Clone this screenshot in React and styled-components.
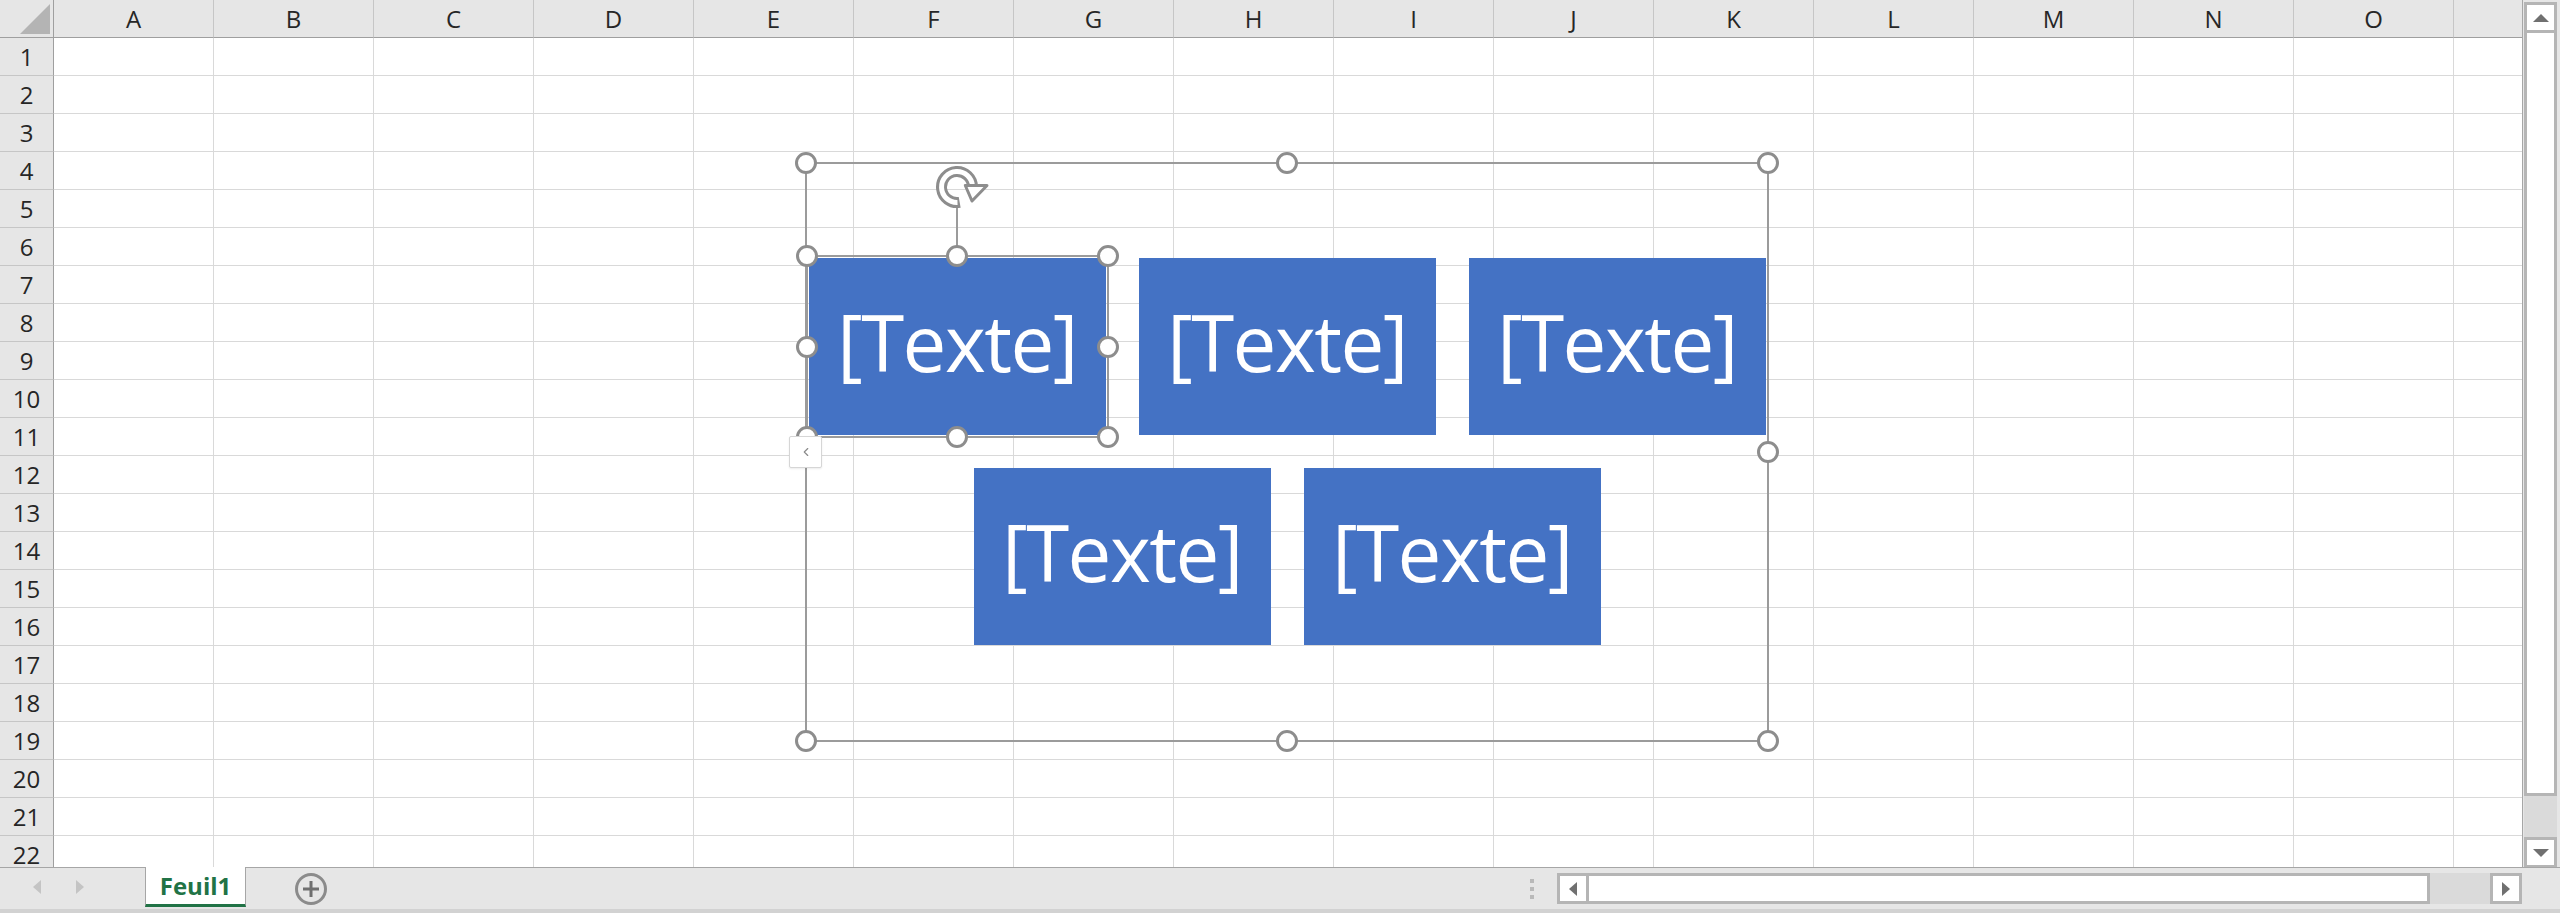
import React from "react";
import styled, { createGlobalStyle } from "styled-components";
import { ChevronLeft } from "lucide-react";

const GlobalStyle = createGlobalStyle`
  html, body {
    margin: 0;
    padding: 0;
    overflow: hidden;
    background: #fff;
  }
  body {
    font-family: "Open Sans", "Noto Sans", sans-serif;
  }
`;

// P is only partly on screen, its label falls past the visible edge
const COLUMNS = "ABCDEFGHIJKLMNOP".split("");
const ROWS = Array.from({ length: 22 }, (_, i) => i + 1);
const HANDLES = [
  [0, 0], [50, 0], [100, 0],
  [0, 50], [100, 50],
  [0, 100], [50, 100], [100, 100],
];

const Window = styled.div`
  width: 2560px;
  height: 913px;
  display: grid;
  grid-template-rows: 867px 46px;
  background: #e6e6e6;
  overflow: hidden;
`;

const Workspace = styled.div`
  display: flex;
  min-height: 0;
`;

const Sheet = styled.div`
  position: relative;
  width: 2523px;
  height: 867px;
  box-sizing: border-box;
  border-right: 1px solid #a6a6a6;
  background: #fff;
  overflow: hidden;
`;

const Grid = styled.div`
  display: grid;
  grid-template-columns: 54px repeat(16, 160px);
  grid-template-rows: repeat(23, 38px);
`;

const Cell = styled.div`
  position: relative;
  box-sizing: border-box;
  display: flex;
  align-items: center;
  justify-content: center;
  font-size: 24px;
  color: #262626;
  border-right: 1px solid
    ${(p) => (p.$kind === "cell" ? "#d9d9d9" : p.$kind === "col" ? "#c6c6c6" : "#9f9f9f")};
  border-bottom: 1px solid
    ${(p) => (p.$kind === "cell" ? "#d9d9d9" : p.$kind === "row" ? "#c6c6c6" : "#9f9f9f")};
  background: ${(p) => (p.$kind === "cell" ? "#fff" : "#e6e6e6")};

  ${(p) =>
    p.$kind === "corner" &&
    `
    &::after {
      content: "";
      position: absolute;
      right: 3px;
      bottom: 3px;
      width: 0;
      height: 0;
      border-left: 30px solid transparent;
      border-bottom: 30px solid #b4b4b4;
    }
  `}
`;

/* ---------- SmartArt ---------- */

const Frame = styled.div`
  position: absolute;
  left: 805px;
  top: 162px;
  width: 964px;
  height: 580px;
  box-sizing: border-box;
  border: 2px solid #9b9b9b;
  padding-top: 94px;
  display: flex;
  flex-direction: column;
  align-items: center;
  gap: 33px;
`;

const ShapeRow = styled.div`
  display: flex;
  gap: 33px;
`;

const Shape = styled.div`
  position: relative;
  width: 297px;
  height: 177px;
  background: #4472c4;
  color: #fff;
  display: flex;
  align-items: center;
  justify-content: center;
  font-size: 78px;
  letter-spacing: -1.5px;
  line-height: 1;
  padding-bottom: 10px;
  box-sizing: border-box;
`;

const Selection = styled.div`
  position: absolute;
  inset: -3px;
  border: 2px solid #9b9b9b;
  pointer-events: none;
`;

const Handle = styled.span`
  position: absolute;
  z-index: 2;
  width: 22px;
  height: 22px;
  box-sizing: border-box;
  border: 3px solid #8d8d8d;
  border-radius: 50%;
  background: #fff;
  left: calc(${(p) => p.$x}% + ${(p) => p.$x / 50 - 1}px - 11px);
  top: calc(${(p) => p.$y}% + ${(p) => p.$y / 50 - 1}px - 11px);
`;

const Stem = styled.span`
  position: absolute;
  left: calc(50% - 1px);
  top: -50px;
  width: 2px;
  height: 48px;
  background: #9b9b9b;
`;

const RotateWrap = styled.span`
  position: absolute;
  left: calc(50% - 22px);
  top: -92px;
  width: 56px;
  height: 44px;

  svg {
    display: block;
  }
`;

const ExpandTab = styled.div`
  position: absolute;
  z-index: 3;
  left: -18px;
  top: calc(50% - 16px);
  width: 33px;
  height: 32px;
  box-sizing: border-box;
  background: #fff;
  border: 1px solid #d6d6d6;
  border-radius: 2px;
  box-shadow: 0 1px 2px rgba(0, 0, 0, 0.08);
  display: flex;
  align-items: center;
  justify-content: center;
  color: #8a8a8a;
`;

const RotateIcon = () => (
  <svg width="56" height="44" viewBox="0 0 56 44">
    <path d="M 24.7 37.3 A 15.5 15.5 0 1 1 37.5 22" fill="none" stroke="#8d8d8d" strokeWidth="11" />
    <path d="M 22.5 37.5 A 15.5 15.5 0 1 1 37.5 21" fill="none" stroke="#fff" strokeWidth="5" />
    <polygon points="30.3,20.5 52,20.5 37,36" fill="#fff" stroke="#8d8d8d" strokeWidth="3" strokeLinejoin="round" />
  </svg>
);

/* ---------- vertical scrollbar ---------- */

const VScroll = styled.div`
  width: 33px;
  margin-left: 1px;
  padding-top: 2px;
  display: flex;
  flex-direction: column;
`;

const ScrollButton = styled.div`
  box-sizing: border-box;
  width: ${(p) => (p.$w ? `${p.$w}px` : "auto")};
  height: ${(p) => (p.$h ? `${p.$h}px` : "auto")};
  background: #fff;
  border: 3px solid #b5b5b5;
  display: flex;
  align-items: center;
  justify-content: center;
  flex-shrink: 0;
`;

const Arrow = styled.span`
  width: 0;
  height: 0;
  ${(p) =>
    p.$dir === "up"
      ? `border-left: 8px solid transparent; border-right: 8px solid transparent; border-bottom: 8px solid ${p.$color};`
      : p.$dir === "down"
      ? `border-left: 8px solid transparent; border-right: 8px solid transparent; border-top: 8px solid ${p.$color};`
      : p.$dir === "left"
      ? `border-top: 7px solid transparent; border-bottom: 7px solid transparent; border-right: 8px solid ${p.$color};`
      : `border-top: 7px solid transparent; border-bottom: 7px solid transparent; border-left: 8px solid ${p.$color};`}
`;

const Thumb = styled.div`
  box-sizing: border-box;
  background: #fff;
  border: 3px solid #b5b5b5;
  ${(p) => (p.$vertical ? "border-top: none; height: 763px;" : "border-left: none; width: 841px;")}
  flex-shrink: 0;
`;

const Track = styled.div`
  background: #dadada;
  flex-shrink: 0;
  ${(p) => (p.$vertical ? "height: 41px;" : "width: 60px;")}
`;

/* ---------- bottom bar ---------- */

const BottomBar = styled.div`
  display: flex;
  box-sizing: border-box;
  border-top: 1px solid #a6a6a6;
  border-bottom: 4px solid #d2d2d2;
  background: #e6e6e6;
`;

const SheetNav = styled.div`
  width: 145px;
  display: flex;
  align-items: center;
  gap: 35px;
  padding-left: 33px;
  box-sizing: border-box;
  padding-bottom: 4px;
`;

const SheetTab = styled.div`
  width: 101px;
  height: 40px;
  margin-top: -1px;
  box-sizing: border-box;
  background: #fff;
  border-left: 1px solid #a6a6a6;
  border-right: 1px solid #a6a6a6;
  border-bottom: 3px solid #217346;
  color: #217346;
  font-weight: 700;
  font-size: 24px;
  display: flex;
  align-items: center;
  justify-content: center;
`;

const AddSheet = styled.div`
  width: 32px;
  height: 32px;
  margin: 5px 0 0 49px;
  box-sizing: border-box;
  border: 3px solid #8b8b8b;
  border-radius: 50%;
  position: relative;

  &::before,
  &::after {
    content: "";
    position: absolute;
    background: #6f6f6f;
    left: 50%;
    top: 50%;
    transform: translate(-50%, -50%);
  }
  &::before {
    width: 16px;
    height: 3px;
  }
  &::after {
    width: 3px;
    height: 16px;
  }
`;

const Spacer = styled.div`
  flex: 1;
`;

const Grip = styled.div`
  width: 4px;
  margin-right: 23px;
  padding-top: 11px;
  display: flex;
  flex-direction: column;
  gap: 4px;

  span {
    width: 4px;
    height: 4px;
    background: #b9b9b9;
  }
`;

const HScroll = styled.div`
  display: flex;
  height: 31px;
  margin-top: 5px;
`;

const Corner = styled.div`
  width: 38px;
`;

export default function App() {
  return (
    <>
      <GlobalStyle />
      <Window>
        <Workspace>
          <Sheet>
            <Grid>
              <Cell $kind="corner" />
              {COLUMNS.map((c) => (
                <Cell key={c} $kind="col">
                  {c === "P" ? null : c}
                </Cell>
              ))}
              {ROWS.map((r) => (
                <React.Fragment key={r}>
                  <Cell $kind="row">{r}</Cell>
                  {COLUMNS.map((c) => (
                    <Cell key={c + r} $kind="cell" />
                  ))}
                </React.Fragment>
              ))}
            </Grid>

            <Frame>
              {HANDLES.map(([x, y]) => (
                <Handle key={`f${x}-${y}`} $x={x} $y={y} />
              ))}
              <ShapeRow>
                <Shape>
                  [Texte]
                  <Selection>
                    <Stem />
                    <RotateWrap>
                      <RotateIcon />
                    </RotateWrap>
                    {HANDLES.map(([x, y]) => (
                      <Handle key={`s${x}-${y}`} $x={x} $y={y} />
                    ))}
                  </Selection>
                </Shape>
                <Shape>[Texte]</Shape>
                <Shape>[Texte]</Shape>
              </ShapeRow>
              <ShapeRow>
                <Shape>[Texte]</Shape>
                <Shape>[Texte]</Shape>
              </ShapeRow>
              <ExpandTab>
                <ChevronLeft size={14} strokeWidth={2} />
              </ExpandTab>
            </Frame>
          </Sheet>

          <VScroll>
            <ScrollButton $h={31}>
              <Arrow $dir="up" $color="#707070" />
            </ScrollButton>
            <Thumb $vertical />
            <Track $vertical />
            <ScrollButton $h={31}>
              <Arrow $dir="down" $color="#707070" />
            </ScrollButton>
          </VScroll>
        </Workspace>

        <BottomBar>
          <SheetNav>
            <Arrow $dir="left" $color="#c4c4c4" />
            <Arrow $dir="right" $color="#c4c4c4" />
          </SheetNav>
          <SheetTab>Feuil1</SheetTab>
          <AddSheet />
          <Spacer />
          <Grip>
            <span />
            <span />
            <span />
          </Grip>
          <HScroll>
            <ScrollButton $w={32}>
              <Arrow $dir="left" $color="#707070" />
            </ScrollButton>
            <Thumb />
            <Track />
            <ScrollButton $w={32}>
              <Arrow $dir="right" $color="#707070" />
            </ScrollButton>
          </HScroll>
          <Corner />
        </BottomBar>
      </Window>
    </>
  );
}
